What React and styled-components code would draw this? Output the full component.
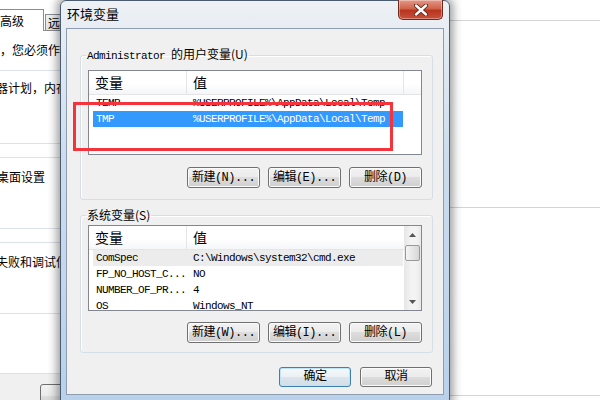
import React from "react";
import styled, { createGlobalStyle } from "styled-components";

const Global = createGlobalStyle`
  html, body {
    margin: 0;
    padding: 0;
  }
  body {
    width: 600px;
    height: 400px;
    overflow: hidden;
    background: #fff;
    font-family: "Noto Sans CJK SC", sans-serif;
  }
`;

const Desktop = styled.div`
  position: relative;
  width: 600px;
  height: 400px;
  overflow: hidden;
  background: #fff;
`;

/* ---------- window behind the dialog ---------- */
const BackWindow = styled.div`
  display: grid;
  grid-template-columns: 450px 150px;
  height: 400px;
`;

const LeftPane = styled.div`
  display: flex;
  flex-direction: column;
  overflow: hidden;
  font-size: 12px;
  color: #000;
`;

const TabStrip = styled.div`
  display: flex;
  align-items: flex-end;
  height: 31px;
  box-sizing: border-box;
  border-bottom: 1px solid #898c95;
`;

const Tab = styled.div`
  height: ${(p) => (p.$active ? 21 : 15)}px;
  width: ${(p) => (p.$active ? 43 : 40)}px;
  margin: 0 0 ${(p) => (p.$active ? -1 : 0)}px ${(p) => (p.$active ? -1 : 1)}px;
  padding-left: ${(p) => (p.$active ? 0 : 2)}px;
  border: 1px solid #898c95;
  border-bottom: none;
  background: ${(p) =>
    p.$active ? "#fff" : "linear-gradient(#f2f2f2, #e1e1e1)"};
  line-height: ${(p) => (p.$active ? 22 : 16)}px;
  font-size: 12px;
  white-space: nowrap;
`;

const Block = styled.div`
  height: ${(p) => p.$h}px;
  flex: ${(p) => (p.$grow ? 1 : "none")};
  box-sizing: border-box;
  padding-top: ${(p) => p.$pt || 0}px;
  border-bottom: ${(p) => (p.$line ? "1px solid #dde2e8" : "none")};
`;

const Para = styled.div`
  line-height: 16px;
  white-space: nowrap;
  margin-left: ${(p) => p.$shift || 0}px;
`;

const BottomBar = styled.div`
  height: 27px;
  box-sizing: border-box;
  background: #f0f0f0;
  border-top: 1px solid #dfdfdf;
  padding: 10px 0 0 40px;
`;

const GhostButton = styled.div`
  width: 80px;
  height: 22px;
  border: 1px solid #707070;
  border-radius: 3px;
  background: linear-gradient(#f2f2f2, #ebebeb 50%, #dddddd 50%, #cfcfcf);
`;

const RightPane = styled.div`
  display: flex;
  flex-direction: column;
`;

const RBlock = styled.div`
  height: ${(p) => p.$h}px;
  box-sizing: border-box;
  border-bottom: 1px solid #d4d4d4;
`;

/* ---------- dialog ---------- */
const Dialog = styled.div`
  position: absolute;
  left: 60px;
  top: 0;
  width: 390px;
  height: 402px;
  box-sizing: border-box;
  display: flex;
  flex-direction: column;
  border: 1px solid #4a5b70;
  border-radius: 6px 6px 0 0;
  background: linear-gradient(#eef1f4 0px, #e3ebf3 40px, #cbdcee 160px, #b9d1eb 100%);
  box-shadow: 0 0 10px 3px rgba(0, 0, 0, 0.4);
`;

const TitleBar = styled.div`
  height: 27px;
  display: flex;
  justify-content: space-between;
  align-items: flex-start;
  flex: none;
`;

const Title = styled.div`
  padding: 5px 0 0 6px;
  font-size: 13px;
  line-height: 16px;
  color: #000;
`;

const CloseButton = styled.div`
  width: 43px;
  height: 19px;
  margin: -1px 6px 0 0;
  display: flex;
  align-items: center;
  justify-content: center;
  border: 1px solid #6e2a1e;
  border-top: none;
  border-radius: 0 0 5px 5px;
  background: linear-gradient(#e49a88 0%, #d0624a 45%, #b8351f 55%, #c9503a 100%);
  box-shadow: inset 0 0 0 1px rgba(255, 255, 255, 0.35);
`;

const Client = styled.div`
  flex: 1;
  margin: 0 5px 6px;
  border: 1px solid #8e9db0;
  background: #f0f0f0;
  padding: 0 10px 0 13px;
`;

const Group = styled.fieldset`
  margin: ${(p) => p.$mt}px 0 0;
  padding: ${(p) => p.$pt}px 10px ${(p) => p.$pb}px 7px;
  border: 1px solid #d5dfe5;
  border-radius: 3px;
  box-shadow: inset 1px 1px 0 #fff;
`;

const Legend = styled.legend`
  padding: 0 1px;
  margin-left: -2px;
  font-size: 12px;
  line-height: 14px;
  color: #000;
  white-space: nowrap;
`;

const Mono = styled.span`
  font-family: "Liberation Mono", monospace;
  font-size: 11px;
  letter-spacing: -0.6px;
`;

const ListBox = styled.div`
  height: ${(p) => p.$h}px;
  box-sizing: border-box;
  border: 1px solid #828790;
  background: #fff;
  display: flex;
  overflow: hidden;
`;

const ListMain = styled.div`
  flex: 1;
  display: flex;
  flex-direction: column;
  overflow: hidden;
`;

const Header = styled.div`
  height: 24px;
  flex: none;
  display: flex;
  box-sizing: border-box;
  border-bottom: 1px solid #e5e5e5;
  background: linear-gradient(#fff 0%, #fff 55%, #f4f6f8 100%);
`;

const HeadCell = styled.div`
  width: ${(p) => (p.$w ? `${p.$w}px` : "auto")};
  flex: ${(p) => (p.$w ? "none" : 1)};
  box-sizing: border-box;
  padding-left: 6px;
  border-right: ${(p) => (p.$divider ? "1px solid #e5e5e5" : "none")};
  font-size: 14px;
  line-height: 23px;
  color: #000;
`;

const Row = styled.div`
  height: 16px;
  flex: none;
  width: 310px;
  margin-left: 4px;
  display: flex;
  background: ${(p) =>
    p.$state === "selected" ? "#3399ff" : p.$state === "muted" ? "#ececec" : "transparent"};
  color: ${(p) => (p.$state === "selected" ? "#fff" : "#000")};
  font-family: "Liberation Mono", monospace;
  font-size: 11px;
  letter-spacing: -0.6px;
  line-height: 16px;
  white-space: nowrap;
`;

const Cell = styled.div`
  width: ${(p) => (p.$w ? `${p.$w}px` : "auto")};
  flex: ${(p) => (p.$w ? "none" : 1)};
  box-sizing: border-box;
  padding-left: ${(p) => p.$pl}px;
  overflow: hidden;
`;

const ScrollBar = styled.div`
  width: 17px;
  flex: none;
  display: flex;
  flex-direction: column;
  align-items: center;
  background: linear-gradient(90deg, #e6e6e6, #f3f3f3 40%, #f3f3f3 70%, #e8e8e8);
`;

const Arrow = styled.div`
  height: 17px;
  display: flex;
  align-items: center;
  justify-content: center;
`;

const Thumb = styled.div`
  width: 15px;
  height: 16px;
  box-sizing: border-box;
  margin-top: 2px;
  border: 1px solid #999;
  border-radius: 2px;
  background: linear-gradient(90deg, #f4f4f4, #e6e6e6 50%, #d6d6d6);
`;

const Track = styled.div`
  flex: 1;
`;

const ButtonRow = styled.div`
  display: flex;
  justify-content: flex-end;
  gap: ${(p) => p.$gap}px;
  margin: ${(p) => p.$mt}px ${(p) => p.$mr || 0}px 0 0;
`;

const Button = styled.button`
  width: ${(p) => p.$w}px;
  height: ${(p) => p.$h || 21}px;
  padding: 0;
  box-sizing: border-box;
  border: 1px solid ${(p) => (p.$default ? "#3c7fb1" : "#707070")};
  border-radius: 3px;
  background: ${(p) =>
    p.$default
      ? "linear-gradient(#f6f9fb, #eaf0f4 50%, #dce5ec 50%, #d3dde6)"
      : "linear-gradient(#f2f2f2, #ebebeb 50%, #dddddd 50%, #cfcfcf)"};
  box-shadow: inset 0 0 0 1px ${(p) => (p.$default ? "#bfe3f8" : "#fbfbfb")};
  font-family: "Liberation Mono", "Noto Sans CJK SC", monospace;
  font-size: 12px;
  letter-spacing: -0.5px;
  line-height: 18px;
  color: #000;
`;

const RedMark = styled.div`
  position: absolute;
  left: 73px;
  top: 102px;
  width: 320px;
  height: 49px;
  box-sizing: border-box;
  border: 3px solid #f4333c;
  pointer-events: none;
`;

const userRows = [
  { name: "TEMP", value: "%USERPROFILE%\\AppData\\Local\\Temp" },
  { name: "TMP", value: "%USERPROFILE%\\AppData\\Local\\Temp", state: "selected" },
];

const systemRows = [
  { name: "ComSpec", value: "C:\\Windows\\system32\\cmd.exe", state: "muted" },
  { name: "FP_NO_HOST_C...", value: "NO" },
  { name: "NUMBER_OF_PR...", value: "4" },
  { name: "OS", value: "Windows_NT" },
];

const VarRow = ({ row }) => (
  <Row $state={row.state}>
    <Cell $w={94} $pl={3}>{row.name}</Cell>
    <Cell $pl={6}>{row.value}</Cell>
  </Row>
);

const CloseGlyph = () => (
  <svg width="14" height="12" viewBox="0 0 14 12">
    <path d="M2 1.5 L12 10.5 M12 1.5 L2 10.5" stroke="#5a2318" strokeWidth="4.2" strokeLinecap="round" />
    <path d="M2 1.5 L12 10.5 M12 1.5 L2 10.5" stroke="#fff" strokeWidth="2.4" strokeLinecap="round" />
  </svg>
);

const ArrowGlyph = ({ down }) => (
  <svg width="7" height="4" viewBox="0 0 7 4">
    <polygon points={down ? "0,0 7,0 3.5,4" : "0,4 7,4 3.5,0"} fill="#555" />
  </svg>
);

export default function App() {
  return (
    <Desktop>
      <Global />
      <BackWindow>
        <LeftPane>
          <TabStrip>
            <Tab $active>高级</Tab>
            <Tab>远程</Tab>
          </TabStrip>
          <Block $h={40} $pt={11} $line>
            <Para>，您必须作为管理员登录才能进行下列更改。</Para>
          </Block>
          <Block $h={73} $pt={9} $line>
            <Para $shift={-4}>器计划，内存使用，以及虚拟内存</Para>
          </Block>
          <Block $h={14} $line />
          <Block $h={71} $pt={11} $line>
            <Para $shift={-3}>桌面设置</Para>
          </Block>
          <Block $h={14} $line />
          <Block $h={71} $pt={11} $line>
            <Para $shift={-4}>失败和调试信息</Para>
          </Block>
          <Block $grow />
          <BottomBar>
            <GhostButton />
          </BottomBar>
        </LeftPane>
        <RightPane>
          <RBlock $h={21} />
          <RBlock $h={187} />
          <RBlock $h={188} />
        </RightPane>
      </BackWindow>

      <Dialog>
        <TitleBar>
          <Title>环境变量</Title>
          <CloseButton>
            <CloseGlyph />
          </CloseButton>
        </TitleBar>
        <Client>
          <Group $mt={18} $pt={7} $pb={11}>
            <Legend>
              <Mono>Administrator </Mono>的用户变量(U)
            </Legend>
            <ListBox $h={85}>
              <ListMain>
                <Header>
                  <HeadCell $w={98} $divider>变量</HeadCell>
                  <HeadCell $w={217} $divider>值</HeadCell>
                  <HeadCell />
                </Header>
                {userRows.map((r) => (
                  <VarRow key={r.name} row={r} />
                ))}
              </ListMain>
            </ListBox>
            <ButtonRow $gap={8} $mt={12}>
              <Button $w={73}>新建(N)...</Button>
              <Button $w={73}>编辑(E)...</Button>
              <Button $w={73}>删除(D)</Button>
            </ButtonRow>
          </Group>

          <Group $mt={8} $pt={3} $pb={9}>
            <Legend>系统变量(S)</Legend>
            <ListBox $h={86}>
              <ListMain>
                <Header>
                  <HeadCell $w={98} $divider>变量</HeadCell>
                  <HeadCell>值</HeadCell>
                </Header>
                {systemRows.map((r) => (
                  <VarRow key={r.name} row={r} />
                ))}
              </ListMain>
              <ScrollBar>
                <Arrow>
                  <ArrowGlyph />
                </Arrow>
                <Thumb />
                <Track />
                <Arrow>
                  <ArrowGlyph down />
                </Arrow>
              </ScrollBar>
            </ListBox>
            <ButtonRow $gap={8} $mt={11}>
              <Button $w={73}>新建(W)...</Button>
              <Button $w={73}>编辑(I)...</Button>
              <Button $w={73}>删除(L)</Button>
            </ButtonRow>
          </Group>

          <ButtonRow $gap={9} $mt={14} $mr={1}>
            <Button $w={72} $h={20} $default>确定</Button>
            <Button $w={72} $h={20}>取消</Button>
          </ButtonRow>
        </Client>
      </Dialog>

      <RedMark />
    </Desktop>
  );
}
